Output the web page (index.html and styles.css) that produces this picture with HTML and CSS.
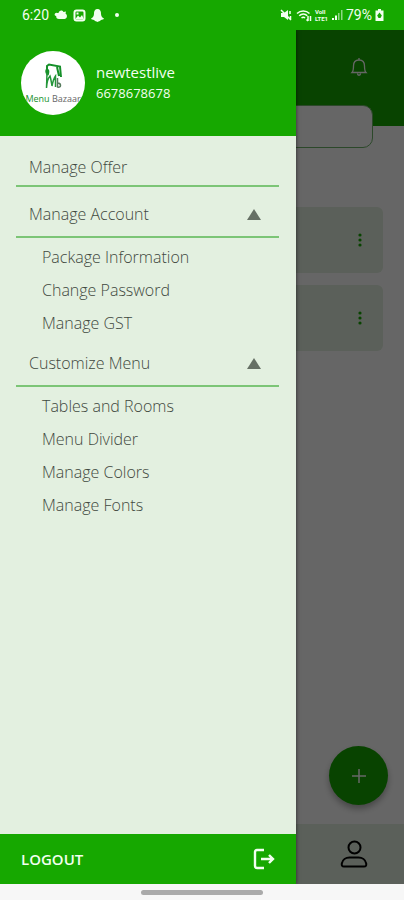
FILE: index.html
```html
<!DOCTYPE html>
<html lang="en">
<head>
<meta charset="utf-8">
<meta name="viewport" content="width=device-width, initial-scale=1">
<title>Menu Bazaar</title>
<link rel="stylesheet" href="styles.css">
</head>
<body>
<header class="status">
  <div class="status-group">
    <span class="clock">6:20</span>
    <svg width="14" height="12" viewBox="0 0 14 12"><path fill="currentColor" d="M1 4.500C2 3 3.500 4 4.500 4C5 1.500 8 .5 9.500 3L12 2.500L11.500 4.500C14 6 13 10 10.500 10H5C3 10 2 9 2.200 7C1 7 0 6 1 4.500Z"/></svg>
    <svg width="13" height="13" viewBox="0 0 13 13"><rect x="1.500" y="1.500" width="10" height="10" rx="2" fill="none" stroke="currentColor" stroke-width="2"/><path fill="currentColor" d="M2 10.500L5 6.500L7 8.500L9 6L11 10.500ZM3.500 3.500h2v2h-2z"/></svg>
    <svg width="13" height="13" viewBox="0 0 13 13"><path fill="currentColor" d="M6.500 0C9 0 10.200 2 10 5C10.200 7.500 11 8.500 13 9.500C12.500 10.700 11.200 10.800 10 11C9 12.500 7.800 12 6.500 13C5.200 12 4 12.500 3 11C1.800 10.800.5 10.700 0 9.500C2 8.500 2.800 7.500 3 5C2.800 2 4 0 6.500 0Z"/></svg>
    <span class="dot"></span>
  </div>
  <div class="status-group status-right">
    <svg width="13" height="12" viewBox="0 0 13 12"><path fill="currentColor" d="M1 4h3l4-3v10L4 8H1z"/><path d="M1 1l10 10M10 2v3M10.500 7v3" stroke="currentColor" stroke-width="1.500"/></svg>
    <svg width="16" height="13" viewBox="0 0 16 13" fill="none" stroke="currentColor" stroke-width="1.500"><path d="M1 4.500C4.500 1 10 1 13.500 4.500M3.200 6.800C5.700 4.500 9 4.500 11.300 6.800M5.500 9C6.700 8 8 8 9 9"/><path d="M12 7v5M10.500 10.500L12 12M14.500 12V7"/></svg>
    <span class="volte"><span>VoII</span><span>LTE1</span></span>
    <svg width="12" height="12" viewBox="0 0 12 12" fill="currentColor"><path d="M1 9h2v2H1zM4 6.500h2V11H4z"/><path d="M7 4h1.500v7H7zM10 1h1.500v10H10z" opacity=".55"/></svg>
    <span class="battery">79%</span>
    <svg width="9" height="12" viewBox="0 0 9 12"><path fill="currentColor" d="M3 0h3v1.500h2.500V12H.5V1.500H3z"/><path fill="#16a800" d="M4.500 3.500L6.800 6.500L5.500 9h-2L2.200 6.500z"/></svg>
  </div>
</header>

<div class="app">
  <main class="page">
    <div class="page-header">
      <button class="plain bell" aria-label="Notifications">
        <svg width="18" height="20" viewBox="0 0 18 20" fill="none" stroke="currentColor" stroke-width="1.300"><path d="M2 15.500C3.500 14 3.500 12 3.500 9C3.500 5 5.500 3 9 3s5.500 2 5.500 6c0 3 0 5 1.500 6.500zM9 1v2M7.500 16.500c0 2.300 3 2.300 3 0"/></svg>
      </button>
    </div>
    <input class="search" type="search" aria-label="Search">
    <div class="cards">
      <article class="card"><button class="plain more" aria-label="More options"><svg width="4" height="14" viewBox="0 0 4 14" fill="currentColor"><circle cx="2" cy="2" r="1.600"/><circle cx="2" cy="7" r="1.600"/><circle cx="2" cy="12" r="1.600"/></svg></button></article>
      <article class="card"><button class="plain more" aria-label="More options"><svg width="4" height="14" viewBox="0 0 4 14" fill="currentColor"><circle cx="2" cy="2" r="1.600"/><circle cx="2" cy="7" r="1.600"/><circle cx="2" cy="12" r="1.600"/></svg></button></article>
    </div>
    <button class="fab" aria-label="Add"><svg width="14" height="14" viewBox="0 0 14 14"><path d="M7 0v14M0 7h14" stroke="currentColor" stroke-width="1.500"/></svg></button>
    <nav class="tabs" aria-label="Main">
      <a class="tab" href="#profile" aria-label="Profile"><svg width="28" height="28" viewBox="0 0 28 28" fill="none" stroke="currentColor" stroke-width="2"><circle cx="14.500" cy="7.500" r="6"/><path d="M4 26.500C2 26.500 1.500 25.500 1.800 23.500C2.500 19.500 6 17.500 9.500 17.500h9c3.500 0 7 2 7.700 6C26.500 25.500 26 26.500 24 26.500z"/></svg></a>
    </nav>
  </main>
  <div class="scrim"></div>

  <aside class="drawer">
    <div class="profile">
      <div class="avatar">
        <svg width="20" height="28" viewBox="0 0 20 28" fill="none"><path d="M4 8V3L6 1.500L17 3.500L18 14M14 4L16 13" stroke="#16902a" stroke-width="2"/><path d="M3 6c3-1 4 2 3 5c-.5 2-2 2-3 0c-1-2-1-4 0-5z" fill="#16902a"/><path d="M4 10L3.500 25M3.500 25C4 18 6 14 7 13C8 16 8.500 20 9 23C10 18 11 15 12.500 13V24" stroke="#24963a" stroke-width="1.500"/><path d="M14.500 15v9c4 1 4-4 0-4" stroke="#557a5c" stroke-width="1.500"/></svg>
        <span class="brand"><b>Menu</b> Bazaar</span>
      </div>
      <div class="who"><span>newtestlive</span><span class="phone">6678678678</span></div>
    </div>
    <nav class="menu" aria-label="Account menu">
      <a class="row row-first" href="#offer">Manage Offer</a>
      <button class="row row-group" aria-expanded="true">Manage Account<span class="arrow"></span></button>
      <div class="sub">
        <a href="#package">Package Information</a>
        <a href="#password">Change Password</a>
        <a href="#gst">Manage GST</a>
      </div>
      <button class="row" aria-expanded="true">Customize Menu<span class="arrow"></span></button>
      <div class="sub">
        <a href="#tables">Tables and Rooms</a>
        <a href="#divider">Menu Divider</a>
        <a href="#colors">Manage Colors</a>
        <a href="#fonts">Manage Fonts</a>
      </div>
    </nav>
    <button class="logout">LOGOUT
      <svg width="22" height="22" viewBox="0 0 22 22" fill="none" stroke="currentColor" stroke-width="2.400"><path d="M11 2H4Q2 2 2 4V18Q2 20 4 20H11M8 11H20M16 7L20 11L16 15"/></svg>
    </button>
  </aside>
</div>
<footer class="gesture"><span class="handle"></span></footer>
</body>
</html>
```
FILE: styles.css
```css
* { box-sizing: border-box; }
:root {
  --green: #16a800;
  --mint: #e3f0e0;
}
body {
  margin: 0;
  min-height: 100vh;
  display: flex;
  flex-direction: column;
  font-family: "Open Sans", "Noto Sans", sans-serif;
  font-size: 16px;
  line-height: 20px;
}
svg { display: block; flex: none; }
a { color: inherit; text-decoration: none; }
button { font: inherit; color: inherit; border: 0; cursor: pointer; }
.plain { background: none; padding: 0; }

.status {
  height: 30px;
  padding: 0 20px 0 22px;
  display: flex;
  align-items: center;
  justify-content: space-between;
  background: var(--green);
  color: #f2fff0;
  font-family: Roboto, sans-serif;
  font-size: 14px;
}
.status-group { display: flex; align-items: center; gap: 5px; }
.status-right { gap: 3px; }
.dot { width: 4px; height: 4px; margin-left: 6px; border-radius: 50%; background: currentColor; }
.volte { display: grid; font-size: 6px; line-height: 7px; font-weight: 700; }

.app { flex: 1; display: flex; position: relative; overflow: hidden; }
.page { flex: 1; display: flex; flex-direction: column; background: #fff; }
.page-header {
  height: 96px;
  padding: 27px 36px 0;
  display: flex;
  justify-content: flex-end;
  align-items: flex-start;
  background: var(--green);
  color: #fff;
}
.search {
  height: 43px;
  margin: -21px 31px 0;
  border: 1px solid #6fb56a;
  border-radius: 10px;
  background: #fff;
}
.cards { flex: 1; display: grid; gap: 12px; align-content: start; padding: 59px 21px 0; }
.card {
  height: 66px;
  padding: 0 21px;
  display: flex;
  align-items: center;
  justify-content: flex-end;
  border-radius: 6px;
  background: var(--mint);
  color: var(--green);
}
.fab {
  width: 59px;
  height: 59px;
  margin: 0 16px 19px;
  align-self: flex-end;
  display: grid;
  place-items: center;
  border-radius: 50%;
  background: var(--green);
  color: #fff;
  box-shadow: 0 4px 6px rgba(0, 0, 0, .3);
}
.tabs { height: 60px; padding: 0 36px; display: flex; align-items: center; justify-content: flex-end; background: var(--mint); }
.tab { color: #000; }
.scrim { position: absolute; inset: 0; background: rgba(0, 0, 0, .6); }

.drawer {
  position: absolute;
  inset: 0 auto 0 0;
  width: 73.2%;
  display: flex;
  flex-direction: column;
  background: var(--mint);
  box-shadow: 0 0 4px rgba(0, 0, 0, .6);
}
.profile {
  height: 106px;
  padding: 0 21px;
  display: flex;
  align-items: center;
  gap: 11px;
  background: var(--green);
  color: #f2fff0;
}
.avatar {
  width: 64px;
  height: 64px;
  display: flex;
  flex-direction: column;
  align-items: center;
  padding-top: 12px;
  border-radius: 50%;
  overflow: hidden;
  background: #fff;
}
.brand { font-size: 9px; line-height: 16px; white-space: nowrap; color: #666; }
.brand b { font-weight: 400; color: #16902a; }
.who { display: grid; font-size: 15px; line-height: 21px; font-weight: 500; }
.phone { font-size: 13px; }

.menu { flex: 1; padding: 0 17px 0 16px; color: #3f483e; font-weight: 300; }
.row {
  width: 100%;
  padding: 13px 18px 12px 13px;
  display: flex;
  align-items: center;
  justify-content: space-between;
  border-bottom: 2px solid #7cc576;
  background: none;
  font-weight: 300;
}
.row-first { padding-top: 21px; padding-bottom: 8px; }
.row-group { padding-top: 17px; }
.arrow {
  border: 7px solid transparent;
  border-top: 0;
  border-bottom: 11px solid #667065;
}
.sub { padding: 3px 0 0 26px; }
.sub a { display: block; padding: 6px 0; line-height: 21px; }
.logout {
  height: 50px;
  padding: 0 21px;
  display: flex;
  align-items: center;
  justify-content: space-between;
  background: var(--green);
  color: #f2fff0;
  font-size: 15px;
  font-weight: 600;
}
.gesture { height: 16px; display: grid; place-items: center; background: #f7f7f7; }
.handle { width: 30%; height: 5px; border-radius: 3px; background: #aaa; }
```
